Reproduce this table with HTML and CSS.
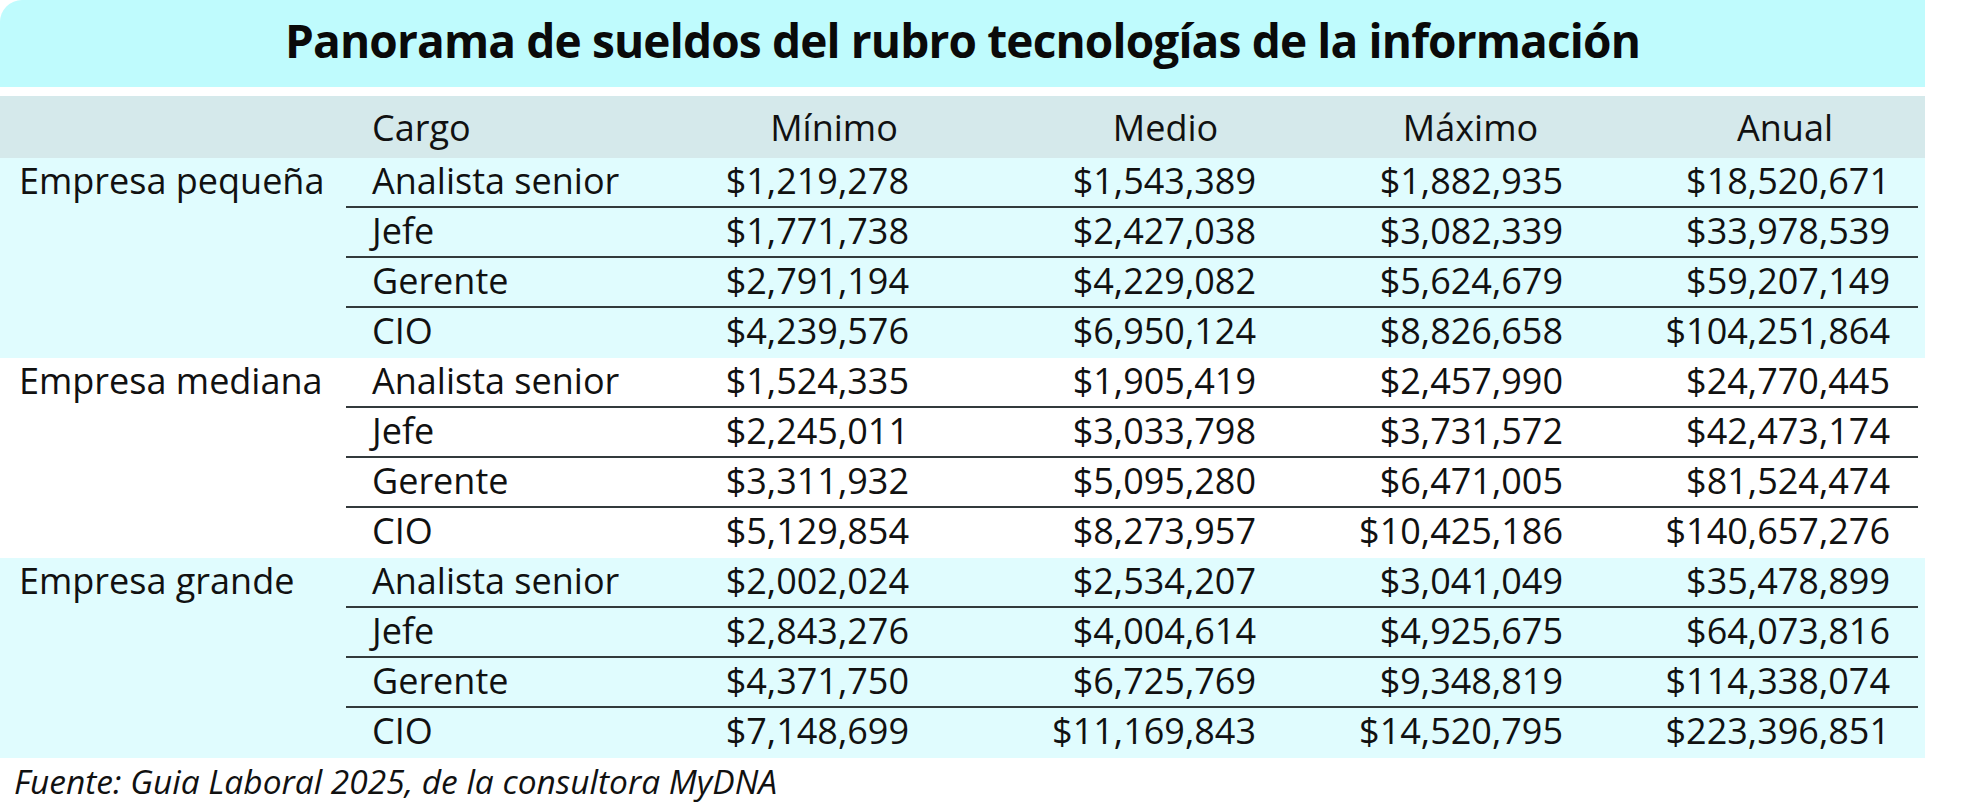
FILE: index.html
```html
<!DOCTYPE html>
<html lang="es">
<head>
<meta charset="utf-8">
<title>Panorama de sueldos del rubro tecnologías de la información</title>
<link rel="stylesheet" href="styles.css">
</head>
<body>
<div class="sheet">
  <div class="title-band"><h1 class="title">Panorama de sueldos del rubro tecnologías de la información</h1></div>
  <div class="head">
    <div class="head-spacer"></div>
    <div class="cols">
      <div class="hcell h-cargo">Cargo</div>
      <div class="hcell h-min">Mínimo</div>
      <div class="hcell h-med">Medio</div>
      <div class="hcell h-max">Máximo</div>
      <div class="hcell h-anual">Anual</div>
    </div>
  </div>

  <div class="group tint">
    <div class="group-label">Empresa pequeña</div>
    <div class="rows">
      <div class="row"><div class="cargo">Analista senior</div><div class="num">$1,219,278</div><div class="num">$1,543,389</div><div class="num">$1,882,935</div><div class="num">$18,520,671</div></div>
      <div class="row"><div class="cargo">Jefe</div><div class="num">$1,771,738</div><div class="num">$2,427,038</div><div class="num">$3,082,339</div><div class="num">$33,978,539</div></div>
      <div class="row"><div class="cargo">Gerente</div><div class="num">$2,791,194</div><div class="num">$4,229,082</div><div class="num">$5,624,679</div><div class="num">$59,207,149</div></div>
      <div class="row"><div class="cargo">CIO</div><div class="num">$4,239,576</div><div class="num">$6,950,124</div><div class="num">$8,826,658</div><div class="num">$104,251,864</div></div>
    </div>
  </div>

  <div class="group">
    <div class="group-label">Empresa mediana</div>
    <div class="rows">
      <div class="row"><div class="cargo">Analista senior</div><div class="num">$1,524,335</div><div class="num">$1,905,419</div><div class="num">$2,457,990</div><div class="num">$24,770,445</div></div>
      <div class="row"><div class="cargo">Jefe</div><div class="num">$2,245,011</div><div class="num">$3,033,798</div><div class="num">$3,731,572</div><div class="num">$42,473,174</div></div>
      <div class="row"><div class="cargo">Gerente</div><div class="num">$3,311,932</div><div class="num">$5,095,280</div><div class="num">$6,471,005</div><div class="num">$81,524,474</div></div>
      <div class="row"><div class="cargo">CIO</div><div class="num">$5,129,854</div><div class="num">$8,273,957</div><div class="num">$10,425,186</div><div class="num">$140,657,276</div></div>
    </div>
  </div>

  <div class="group tint">
    <div class="group-label">Empresa grande</div>
    <div class="rows">
      <div class="row"><div class="cargo">Analista senior</div><div class="num">$2,002,024</div><div class="num">$2,534,207</div><div class="num">$3,041,049</div><div class="num">$35,478,899</div></div>
      <div class="row"><div class="cargo">Jefe</div><div class="num">$2,843,276</div><div class="num">$4,004,614</div><div class="num">$4,925,675</div><div class="num">$64,073,816</div></div>
      <div class="row"><div class="cargo">Gerente</div><div class="num">$4,371,750</div><div class="num">$6,725,769</div><div class="num">$9,348,819</div><div class="num">$114,338,074</div></div>
      <div class="row"><div class="cargo">CIO</div><div class="num">$7,148,699</div><div class="num">$11,169,843</div><div class="num">$14,520,795</div><div class="num">$223,396,851</div></div>
    </div>
  </div>

  <p class="source">Fuente: Guia Laboral 2025, de la consultora MyDNA</p>
</div>
</body>
</html>
```

FILE: styles.css
```css
* {
  box-sizing: border-box;
}

html, body {
  margin: 0;
  padding: 0;
  background: #ffffff;
}

body {
  font-family: "Open Sans", "Noto Sans", "Liberation Sans", sans-serif;
  color: #111111;
}

.sheet {
  width: 1925px;
}

.title-band {
  height: 87px;
  background: #bffbfd;
  border-top-left-radius: 22px;
  padding-top: 2px;
  text-align: center;
}

.title {
  margin: 0;
  font-size: 46px;
  font-weight: 700;
  letter-spacing: -0.85px;
  line-height: 76px;
  color: #0a0a0a;
}

.head {
  display: flex;
  height: 62px;
  margin-top: 9px;
  background: #d5e9eb;
  padding-top: 2px;
}

.head-spacer {
  width: 346px;
  flex: none;
}

.cols,
.row {
  display: grid;
  grid-template-columns: 274px 312px 347px 307px 332px;
}

.hcell {
  font-size: 36px;
  line-height: 60px;
  text-align: center;
}

.hcell.h-cargo {
  text-align: left;
  padding-left: 26px;
}

.hcell.h-min { padding-left: 116px; }
.hcell.h-med { padding-left: 120px; }
.hcell.h-max { padding-left: 76px; }
.hcell.h-anual { padding-left: 66px; }

.group {
  display: flex;
  background: #ffffff;
}

.group.tint {
  background: #e0fcfe;
}

.group-label {
  width: 346px;
  flex: none;
  padding-left: 19px;
  font-size: 36px;
  line-height: 46px;
  white-space: nowrap;
}

.rows {
  width: 1572px;
  flex: none;
}

.row {
  height: 50px;
  padding-bottom: 4px;
  border-bottom: 2px solid #333a3c;
  font-size: 36px;
  line-height: 46px;
}

.row:last-child {
  border-bottom-color: transparent;
}

.cargo {
  padding-left: 26px;
  white-space: nowrap;
}

.num {
  text-align: right;
  padding-right: 23px;
  white-space: nowrap;
}

.num:last-child {
  padding-right: 28px;
}

.source {
  margin: 0;
  padding-left: 14px;
  font-size: 33.5px;
  font-style: italic;
  line-height: 46px;
  color: #111111;
}
```
